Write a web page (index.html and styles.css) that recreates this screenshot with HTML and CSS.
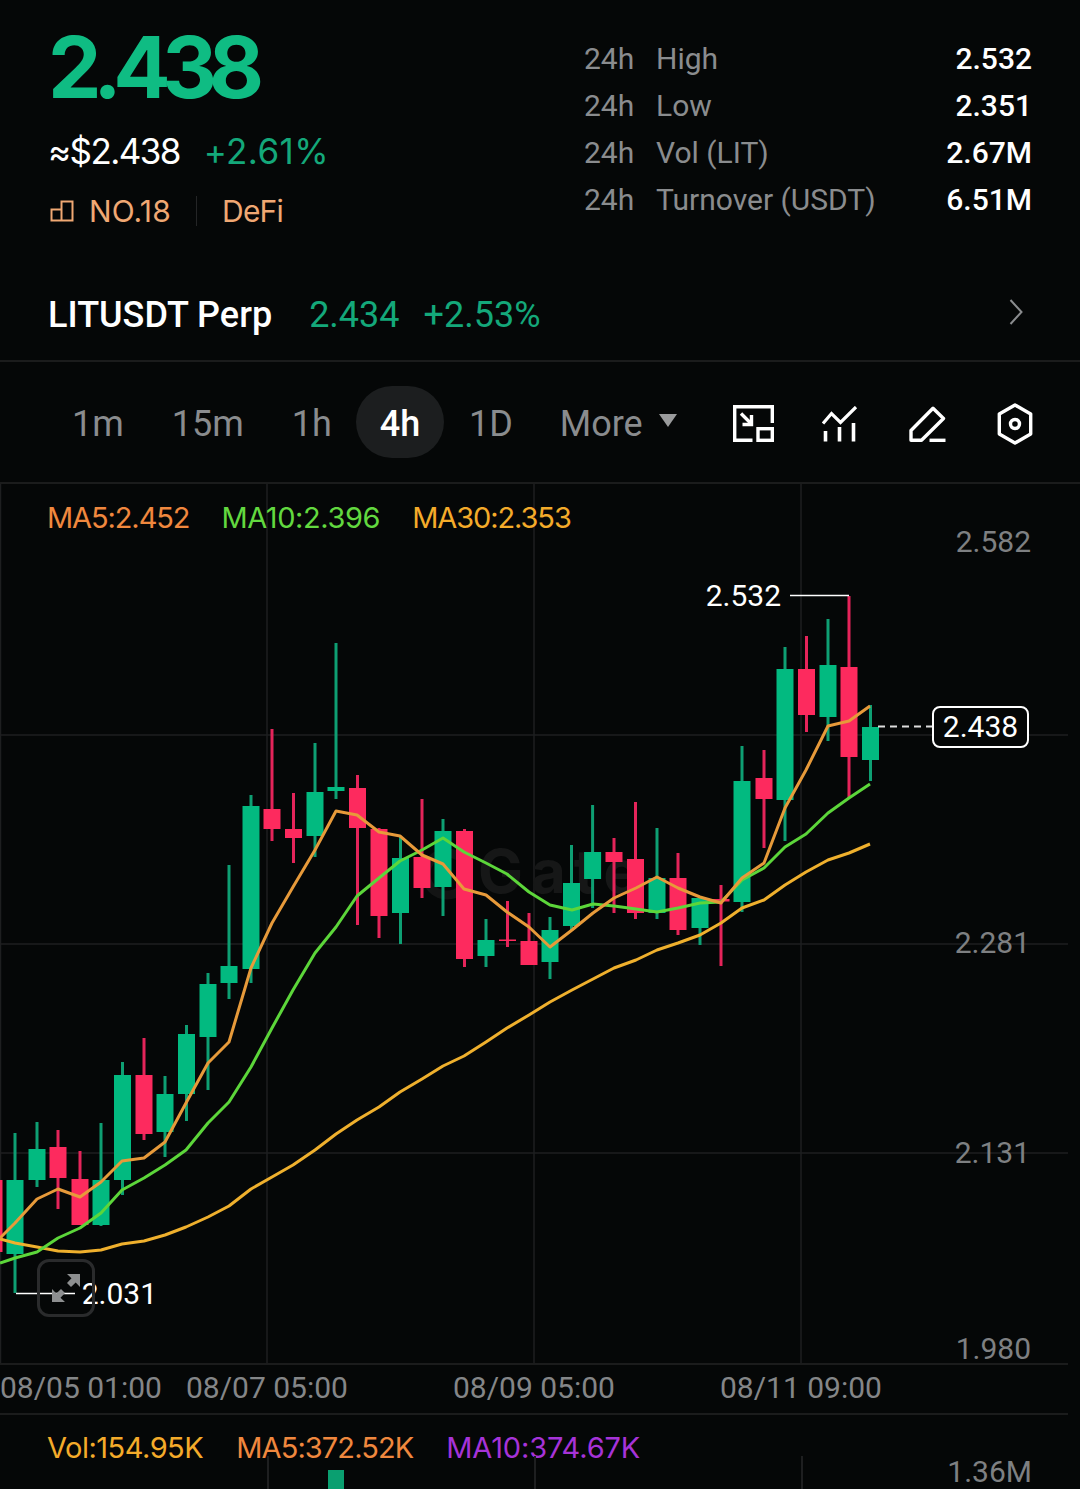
FILE: index.html
```html
<!DOCTYPE html>
<html lang="en">
<head>
<meta charset="utf-8">
<title>LIT/USDT chart</title>
<link rel="stylesheet" href="styles.css">
</head>
<body>
<main class="page">
  <header class="summary">
    <div class="price-col">
      <div class="price">2.438</div>
      <div class="price-sub"><span class="usd">≈$2.438</span><span class="change">+2.61%</span></div>
      <div class="tags">
        <svg class="rank-icon" viewBox="0 0 24 24" width="24" height="24"><path d="M1.5 21.5V10.5H11.5V21.5H1.5ZM11.5 10.5V2.5H22.5V21.5H11.5" fill="none" stroke="currentColor" stroke-width="2"/></svg>
        <span class="rank">NO.18</span><span class="tag-sep"></span><span class="rank defi">DeFi</span>
      </div>
    </div>
    <dl class="stats">
      <div class="stat"><dt><span class="h">24h</span>High</dt><dd>2.532</dd></div>
      <div class="stat"><dt><span class="h">24h</span>Low</dt><dd>2.351</dd></div>
      <div class="stat"><dt><span class="h">24h</span>Vol (LIT)</dt><dd>2.67M</dd></div>
      <div class="stat"><dt><span class="h">24h</span>Turnover (USDT)</dt><dd>6.51M</dd></div>
    </dl>
  </header>

  <section class="perp">
    <span class="perp-name">LITUSDT Perp</span>
    <span class="perp-price">2.434</span>
    <span class="perp-change">+2.53%</span>
    <svg class="chev" viewBox="0 0 16 28" width="16" height="28"><path d="M2.5 2L13.5 14L2.5 26" fill="none" stroke="currentColor" stroke-width="2"/></svg>
  </section>

  <nav class="tabs">
    <span class="tab t1">1m</span>
    <span class="tab t15">15m</span>
    <span class="tab t1h">1h</span>
    <span class="tab active">4h</span>
    <span class="tab t1d">1D</span>
    <span class="tab more">More<i class="caret"></i></span>
    <div class="tools">
      <svg class="tool-frame" viewBox="0 0 41 37" width="41" height="37"><g fill="none" stroke="#fff" stroke-width="3.4"><path d="M19.500 35.300H1.700V1.700H39.300V18"/><rect x="25" y="23.700" width="14.300" height="11.600"/><path d="M8 8.500L18.500 19"/><path d="M18.500 10V19.500H9.500"/></g></svg>
      <svg viewBox="0 0 36 36" width="36" height="36"><g fill="none" stroke="#fff" stroke-width="3.2"><path d="M1 17.500L9.500 7.500L18.500 16.500L34 1"/><path d="M3.500 25V35.500M17.500 21V35.500M31.500 17V35.500" stroke-width="3.600"/></g></svg>
      <svg viewBox="0 0 37 36" width="37" height="36"><g fill="none" stroke="#fff" stroke-width="3.400"><path d="M2 34.300V24.500L24 2.300L34.500 12.500L12.500 34.300Z" stroke-linejoin="round"/><path d="M20.500 34.300H36.500"/></g></svg>
      <svg viewBox="0 0 36 42" width="36" height="42"><g fill="none" stroke="#fff" stroke-width="3.400"><path d="M18 2L33.700 11V31L18 40L2.300 31V11Z" stroke-linejoin="round"/><circle cx="18" cy="21" r="4.500"/></g></svg>
    </div>
  </nav>

  <section class="chart">
    <svg class="plot" viewBox="0 484 1080 879" width="1080" height="879">
      <g class="grid">
        <path d="M0 735H1068M0 944H1068M0 1153H1068"/>
        <path d="M0.500 484V1363M267 484V1363M534 484V1363M801 484V1363"/>
      </g>
      <circle class="watermark-ring" cx="447" cy="874" r="21"/>
      <text class="watermark" x="478" y="893">Gate</text>
      <path class="wick green" d="M15 1133V1293M37 1122V1187M101 1123V1226M122.500 1062V1195M165 1076V1157M186.500 1025V1121M208 973V1090M229 865V999M251 795V983M315 743V857M336 643V799M400.500 837V944M443 819V916M486 919V967M550 917V979M571.500 845V930M592.600 805V908M657 828V919M700 898V945M742 746V912M785 647V841M828 619V741M870.500 705V781"/>
      <path class="wick red" d="M58 1130V1209M80 1151V1179M144 1038V1140M272 729V841M293.500 793V863M357.500 775V925M379 828V938M422 799V898M464.500 829V967M507.500 901V947M529 913V965M614 838V913M635.500 802V919M678 853V935M721 885V966M764 750V848M806.500 636V732M849 596V798"/>
      <path class="body green" d="M15 1180V1254M37 1149V1180M101 1180V1225M122.500 1075V1180M165 1094V1132M186.500 1034V1094M208 984V1037M229 966V983M251 806V969M315 792V836M336 787V791M400.500 858V913M443 831V887M486 940V956M550 930V962M571.500 883V926M592.600 852V879M657 878V913M700 898V928M742 781V902M785 669V800M828 665V717M870.500 727V760"/>
      <path class="body red" d="M-6 1180V1252M58 1147V1178M80 1179V1225M144 1075V1134M272 809V829M293.500 829V838M357.500 788V828M379 829V916M422 857V888M464.500 831V959M507.500 939.500V941M529 941V965M614 852V862M635.500 859V913M678 878V930M721 899V901.500M764 778V799M806.500 669V715M849 667V757"/>
      <polyline class="ma ma30" points="0,1239 15,1243 37,1247 58,1251 80,1252 101,1250 122,1244 144,1241 165,1235 186,1227 208,1217 229,1206 251,1189 272,1177 293,1165 315,1150 336,1134 357,1120 379,1107 400,1092 422,1079 443,1066 464,1056 486,1042 507,1028 529,1015 550,1002 572,990 593,979 614,968 636,960 657,950 678,943 700,935 721,923 742,908 764,900 785,885 806,872 828,860 849,853 870,844"/>
      <polyline class="ma ma10" points="0,1263 15,1258 37,1252 58,1238 80,1228 101,1213 122,1190 144,1178 165,1165 186,1150 208,1123 229,1102 251,1067 272,1028 293,990 315,953 336,927 357,896 379,878 400,861 422,850 443,838 464,852 486,863 507,874 529,892 550,905 572,910 593,904 614,906 636,909 657,912 678,908 700,903 721,902 742,880 764,868 785,847 806,834 828,813 849,798 870,784"/>
      <polyline class="ma ma5" points="0,1238 15,1223 37,1199 58,1189 80,1197 101,1182 122,1161 144,1158 165,1142 186,1103 208,1063 229,1042 251,968 272,923 293,887 315,850 336,811 357,815 379,832 400,836 422,855 443,864 464,889 486,895 507,912 529,927 550,947 572,930 593,913 614,898 636,888 657,877 678,888 700,897 721,903 742,878 764,863 785,808 806,770 828,726 849,721 870,706"/>
      <path class="marker" d="M790 595.500H849"/>
      <path class="marker" d="M16 1293.500H75"/>
      <path class="dash" d="M878 726.500H932"/>
      <g class="axis">
        <text x="1031" y="552">2.582</text>
        <text x="1030" y="953">2.281</text>
        <text x="1030" y="1163">2.131</text>
        <text x="1031" y="1359">1.980</text>
      </g>
      <text class="extreme" x="781" y="606">2.532</text>
      <text class="extreme" x="157" y="1304">2.031</text>
    </svg>
    <ul class="legend main-legend">
      <li class="c-ma5">MA5:2.452</li>
      <li class="c-ma10">MA10:2.396</li>
      <li class="c-ma30">MA30:2.353</li>
    </ul>
    <div class="last-price">2.438</div>
    <div class="expand">
      <svg viewBox="0 0 28 28" width="28" height="28"><g fill="#8d8f90"><path d="M15 0H28V13L23.700 8.500L19 13L15 9L19.500 4.300Z"/><path d="M13 28H0V15L4.300 19.500L9 15L13 19L8.500 23.700Z"/></g></svg>
    </div>
  </section>

  <div class="xaxis">
    <span class="x0">08/05 01:00</span>
    <span class="x1">08/07 05:00</span>
    <span class="x2">08/09 05:00</span>
    <span class="x3">08/11 09:00</span>
  </div>

  <section class="volume">
    <ul class="legend vol-legend">
      <li class="c-vol">Vol:154.95K</li>
      <li class="c-ma5v">MA5:372.52K</li>
      <li class="c-ma10v">MA10:374.67K</li>
    </ul>
    <span class="vol-max">1.36M</span>
    <span class="vol-bar"></span>
    <span class="vline v1"></span><span class="vline v2"></span><span class="vline v3"></span>
  </section>
</main>
</body>
</html>
```
FILE: styles.css
```css
* { box-sizing: border-box; margin: 0; padding: 0; }
html, body { background: #050707; }
body { width: 1080px; height: 1489px; overflow: hidden; font-family: Roboto, "Liberation Sans", sans-serif; color: #fff; }
.page { width: 1080px; height: 1489px; display: flex; flex-direction: column; overflow: hidden; }

.summary { height: 272px; display: flex; justify-content: space-between; padding: 0 48px 0 48px; }
.price-col { display: flex; flex-direction: column; }
.price { font-family: Inter, sans-serif; font-weight: 700; font-size: 85px; line-height: 80px; height: 80px; margin-top: 28px; letter-spacing: -8.400px; color: #0fbc83; }
.price-sub { display: flex; gap: 24px; margin-top: 21px; height: 44px; align-items: center; font-family: Inter, sans-serif; font-size: 35px; }
.usd { color: #fff; letter-spacing: -1.600px; }
.change { color: #14a87a; letter-spacing: 0.4px; }
.tags { display: flex; align-items: center; margin-top: 20px; height: 36px; color: #f0a873; }
.rank-icon { margin: 0 15px 0 2px; }
.rank { font-family: Inter, sans-serif; font-size: 30px; letter-spacing: 0.2px; color: #f0a873; }
.defi { letter-spacing: -0.8px; }
.tag-sep { width: 1px; height: 30px; background: #242526; margin: 0 25px; }

.stats { width: 448px; margin-top: 35px; display: flex; flex-direction: column; }
.stat { display: flex; justify-content: space-between; height: 47px; align-items: center; font-size: 30px; }
.stat dt { color: #8a8c8e; }
.stat .h { display: inline-block; width: 72px; }
.stat dd { font-weight: 500; font-size: 30px; }

.perp { height: 90px; display: flex; align-items: center; padding: 0 48px 2px; border-bottom: 2px solid #1b1c1c; font-size: 36px; }
.perp-name { font-weight: 500; }
.perp-price { margin-left: 37px; color: #14a87a; }
.perp-change { margin-left: 24px; color: #14a87a; }
.chev { margin-left: auto; margin-right: 8px; margin-bottom: 6px; color: #8a8c8e; }

.tabs { height: 122px; display: flex; align-items: center; border-bottom: 2px solid #1b1c1c; font-size: 36px; color: #8a8c8e; padding-left: 72px; }
.tab { display: flex; align-items: center; height: 72px; padding-top: 4px; }
.t15 { margin-left: 48px; }
.t1h { margin-left: 48px; }
.active { width: 88px; margin-left: 24px; justify-content: center; border-radius: 36px; background: #1c1e1f; color: #fff; font-weight: 500; }
.t1d { margin-left: 25px; }
.more { margin-left: 47px; }
.caret { width: 0; height: 0; margin-left: 16px; margin-top: -8px; border-left: 9px solid transparent; border-right: 9px solid transparent; border-top: 13px solid #9a9b9c; }
.tools { margin-left: auto; margin-right: 47px; margin-top: 3px; display: flex; align-items: center; gap: 51px; }
.tool-frame { margin-right: -3px; }

.chart { position: relative; height: 879px; }
.plot { display: block; overflow: visible; }
.grid path { stroke: #1e1f20; stroke-width: 1.500; fill: none; }
.watermark { font-family: Inter, sans-serif; font-weight: 700; font-size: 60px; letter-spacing: 8px; fill: #161717; }
.watermark-ring { fill: none; stroke: #131414; stroke-width: 9; }
.wick { fill: none; stroke-width: 3; }
.body { fill: none; stroke-width: 17; }
.wick.green { stroke: #0e9f73; }
.wick.red { stroke: #e5245a; }
.body.green { stroke: #02ba80; }
.body.red { stroke: #fd2a5e; }
.ma { fill: none; stroke-width: 3; stroke-linejoin: round; }
.ma5 { stroke: #e79a3a; }
.ma10 { stroke: #5cd63a; }
.ma30 { stroke: #efb02d; }
.marker { stroke: #fff; stroke-width: 1.500; fill: none; }
.dash { stroke: #ddd; stroke-width: 2; stroke-dasharray: 7 5; fill: none; }
.axis text { font-size: 30px; fill: #7e8082; text-anchor: end; }
.extreme { font-size: 30px; fill: #fff; text-anchor: end; }

.legend { list-style: none; display: flex; position: absolute; left: 47px; top: 16px; gap: 32px; font-family: Inter, sans-serif; font-size: 29px; letter-spacing: -1.100px; line-height: 36px; }
.c-ma5 { color: #f0883e; }
.c-ma10 { color: #62d83f; letter-spacing: -0.400px; }
.c-ma30 { color: #f4ab2a; letter-spacing: -1.100px; }
.c-vol { color: #f4ab2a; letter-spacing: -0.500px; }
.c-ma5v { color: #f0883e; letter-spacing: -0.900px; }
.c-ma10v { color: #a633d8; letter-spacing: -0.150px; }

.last-price { position: absolute; left: 932px; top: 222px; width: 97px; height: 42px; border: 2px solid #fff; border-radius: 8px; background: #050707; text-align: center; line-height: 38px; font-size: 30px; }
.expand { position: absolute; left: 37px; top: 775px; width: 58px; height: 58px; border: 3px solid #2a2b2c; border-radius: 12px; display: flex; align-items: center; justify-content: center; }

.xaxis { position: relative; height: 52px; border-top: 2px solid #1b1c1c; border-bottom: 2px solid #1b1c1c; font-size: 30px; color: #848688; width: 1068px; }
.xaxis span { position: absolute; top: 5px; line-height: 36px; white-space: nowrap; }
.x0 { left: 0; }
.x1 { left: 186px; }
.x2 { left: 453px; }
.x3 { left: 720px; }

.volume { position: relative; flex: 1; }
.vol-legend { top: 15px; gap: 33px; }
.vol-max { position: absolute; right: 48px; top: 39px; font-size: 30px; color: #7e8082; line-height: 36px; }
.vol-bar { position: absolute; left: 328px; top: 55px; width: 16px; height: 24px; background: #0a9f70; }
.vline { position: absolute; top: 41px; bottom: 0; width: 1.500px; background: #1e1f20; }
.v1 { left: 267px; }
.v2 { left: 534px; }
.v3 { left: 801px; }
```
